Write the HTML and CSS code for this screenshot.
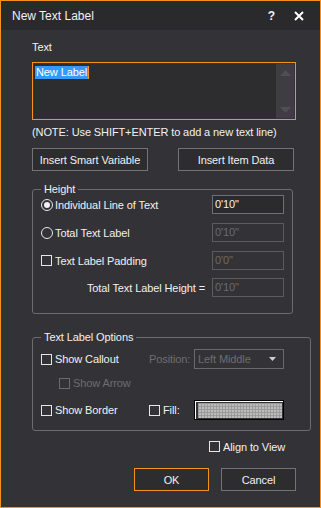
FILE: index.html
```html
<!DOCTYPE html>
<html lang="en">
<head>
    <meta charset="UTF-8">
    <title>New Text Label</title>
    <link rel="stylesheet" href="styles.css">
</head>
<body>
<div class="window">

    <div class="titlebar">
        <span class="title">New Text Label</span>
        <span class="help">?</span>
        <span class="close">
            <svg width="10" height="10" viewBox="0 0 10 10"><path d="M1 1 L9 9 M9 1 L1 9" stroke="#fff" stroke-width="2"/></svg>
        </span>
    </div>

    <div class="content">
        <div class="label">Text</div>

        <div class="textbox">
            <div class="text-area"><span class="selected">New Label</span><span class="caret"></span></div>
            <div class="scrollbar">
                <svg width="11" height="6" viewBox="0 0 11 6"><path d="M0 6 L5.5 0 L11 6 Z" fill="#4f4f54"/></svg>
                <svg width="11" height="6" viewBox="0 0 11 6"><path d="M0 0 L5.5 6 L11 0 Z" fill="#4f4f54"/></svg>
            </div>
        </div>

        <div class="note">(NOTE: Use SHIFT+ENTER to add a new text line)</div>

        <div class="btn-row">
            <button class="button">Insert Smart Variable</button>
            <button class="button">Insert Item Data</button>
        </div>

        <fieldset class="group height-group">
            <legend>Height</legend>
            <div class="row">
                <span class="radio checked"></span>
                <span class="row-text">Individual Line of Text</span>
                <span class="field">0'10"</span>
            </div>
            <div class="row">
                <span class="radio"></span>
                <span class="row-text">Total Text Label</span>
                <span class="field disabled">0'10"</span>
            </div>
            <div class="row">
                <span class="check"></span>
                <span class="row-text">Text Label Padding</span>
                <span class="field disabled">0'0"</span>
            </div>
            <div class="row">
                <span class="row-text right">Total Text Label Height =</span>
                <span class="field disabled">0'10"</span>
            </div>
        </fieldset>

        <fieldset class="group options-group">
            <legend>Text Label Options</legend>
            <div class="opt-row">
                <span class="check-item"><span class="check"></span>Show Callout</span>
                <span class="muted">Position:</span>
                <span class="dropdown">Left Middle
                    <svg width="7" height="4" viewBox="0 0 7 4"><path d="M0 0 L7 0 L3.5 4 Z" fill="#cfcfcf"/></svg>
                </span>
            </div>
            <div class="opt-row arrow-row">
                <span class="check-item muted"><span class="check off"></span>Show Arrow</span>
            </div>
            <div class="opt-row">
                <span class="check-item"><span class="check"></span>Show Border</span>
                <span class="check-item"><span class="check"></span>Fill:</span>
                <span class="swatch"></span>
            </div>
        </fieldset>

        <div class="align-row">
            <span class="check-item"><span class="check"></span>Align to View</span>
        </div>

        <div class="footer-buttons">
            <button class="button ok">OK</button>
            <button class="button">Cancel</button>
        </div>
    </div>

</div>
</body>
</html>
```

FILE: styles.css
```css
body {
    margin: 0;
    padding: 0;
    font-family: "Liberation Sans", Arial, sans-serif;
    font-size: 11px;
    letter-spacing: -0.1px;
    color: #f1f1f1;
    background-color: #333337;
}

.window {
    box-sizing: border-box;
    width: 321px;
    height: 508px;
    border: 1px solid #f7901e;
    background-color: #333337;
}

.titlebar {
    height: 28px;
    display: flex;
    align-items: center;
    background-color: #2a2a2c;
    padding-left: 11px;
    padding-top: 1px;
}

.title {
    flex: 1;
    font-size: 12px;
    letter-spacing: 0;
}

.help {
    font-weight: bold;
    font-size: 12px;
    margin-right: 19px;
}

.close {
    display: flex;
    margin-right: 16px;
}

.content {
    padding: 11px 24px 0 31px;
}

.label {
    line-height: 13px;
}

.textbox {
    margin-top: 8px;
    height: 58px;
    box-sizing: border-box;
    border: 1px solid #f7901e;
    display: flex;
    padding: 1px;
}

.text-area {
    flex: 1;
    background-color: #2d2d30;
    padding: 2px 1px;
    line-height: 13px;
    display: flex;
    align-items: flex-start;
}

.selected {
    background-color: #3399ff;
    color: #fff;
    padding: 0 1px;
}

.caret {
    width: 1px;
    height: 13px;
    background-color: #f7901e;
}

.scrollbar {
    width: 18px;
    background-color: #3e3e42;
    display: flex;
    flex-direction: column;
    justify-content: space-between;
    align-items: center;
    padding: 6px 0 5px;
}

.note {
    margin-top: 6px;
    line-height: 13px;
}

.btn-row {
    margin-top: 9px;
    display: flex;
    justify-content: space-between;
    width: 262px;
}

.button {
    font-family: inherit;
    font-size: 11px;
    letter-spacing: -0.1px;
    color: #f1f1f1;
    background-color: #2d2d30;
    border: 1px solid #737373;
    height: 23px;
    width: 116px;
    padding: 0;
}

.group {
    margin: 12px 0 0 0;
    width: 261px;
    box-sizing: border-box;
    border: 1px solid #6c6c6c;
    border-radius: 3px;
    padding: 0 8px 0 8px;
}

.group legend {
    padding: 0 3px;
    margin-left: 0;
    line-height: 13px;
}

.height-group {
    height: 131px;
}

.row {
    display: flex;
    align-items: center;
    height: 19px;
    margin-top: 9px;
}

.row:first-of-type {
    margin-top: -1px;
}

.row:last-child {
    margin-top: 8px;
}

.row-text {
    flex: 1;
}

.row-text.right {
    text-align: right;
    margin-right: 7px;
}

.field {
    width: 72px;
    height: 19px;
    box-sizing: border-box;
    border: 1px solid #707070;
    background-color: #2b2b2e;
    padding: 2px 2px;
    line-height: 13px;
}

.field.disabled {
    color: #6a6a6a;
    border-color: #5c5c5c;
    background-color: #333337;
}

.radio {
    width: 12px;
    height: 12px;
    box-sizing: border-box;
    border: 1px solid #e6e6e6;
    border-radius: 50%;
    margin-right: 2px;
    position: relative;
}

.radio.checked::after {
    content: "";
    position: absolute;
    left: 2px;
    top: 2px;
    width: 6px;
    height: 6px;
    border-radius: 50%;
    background-color: #f1f1f1;
}

.check {
    width: 11px;
    height: 11px;
    box-sizing: border-box;
    border: 1px solid #e6e6e6;
    margin-right: 3px;
    display: inline-block;
}

.check.off {
    border-color: #6a6a6a;
}

.options-group {
    margin-top: 17px;
    height: 100px;
}

.opt-row {
    display: grid;
    grid-template-columns: 108px 45px 90px;
    align-items: center;
    height: 20px;
    margin-top: 5px;
}

.arrow-row {
    margin-top: 4px;
    padding-left: 18px;
}

.arrow-row + .opt-row {
    margin-top: 7px;
}

.check-item {
    display: flex;
    align-items: center;
}

.muted {
    color: #6d6d6d;
}

.dropdown {
    height: 20px;
    box-sizing: border-box;
    border: 1px solid #6a6a6a;
    color: #6d6d6d;
    display: flex;
    align-items: center;
    justify-content: space-between;
    padding: 0 7px 0 3px;
}

.swatch {
    height: 20px;
    box-sizing: border-box;
    border: 1px solid #000;
    box-shadow: inset 1px 1px 0 #fff;
    background-color: #bcbcbc;
    background-image:
        repeating-linear-gradient(90deg, #9a9a9a 0 1px, transparent 1px 3px),
        repeating-linear-gradient(0deg, #9a9a9a 0 1px, transparent 1px 3px);
    background-clip: content-box;
    padding: 2px 1px 1px 3px;
}

.align-row {
    display: flex;
    margin-top: 9px;
    padding-left: 177px;
    height: 13px;
    align-items: center;
}

.footer-buttons {
    margin-top: 15px;
    display: flex;
    gap: 12px;
    padding-left: 102px;
}

.footer-buttons .button {
    width: 75px;
}

.button.ok {
    border-color: #f7901e;
}
```
